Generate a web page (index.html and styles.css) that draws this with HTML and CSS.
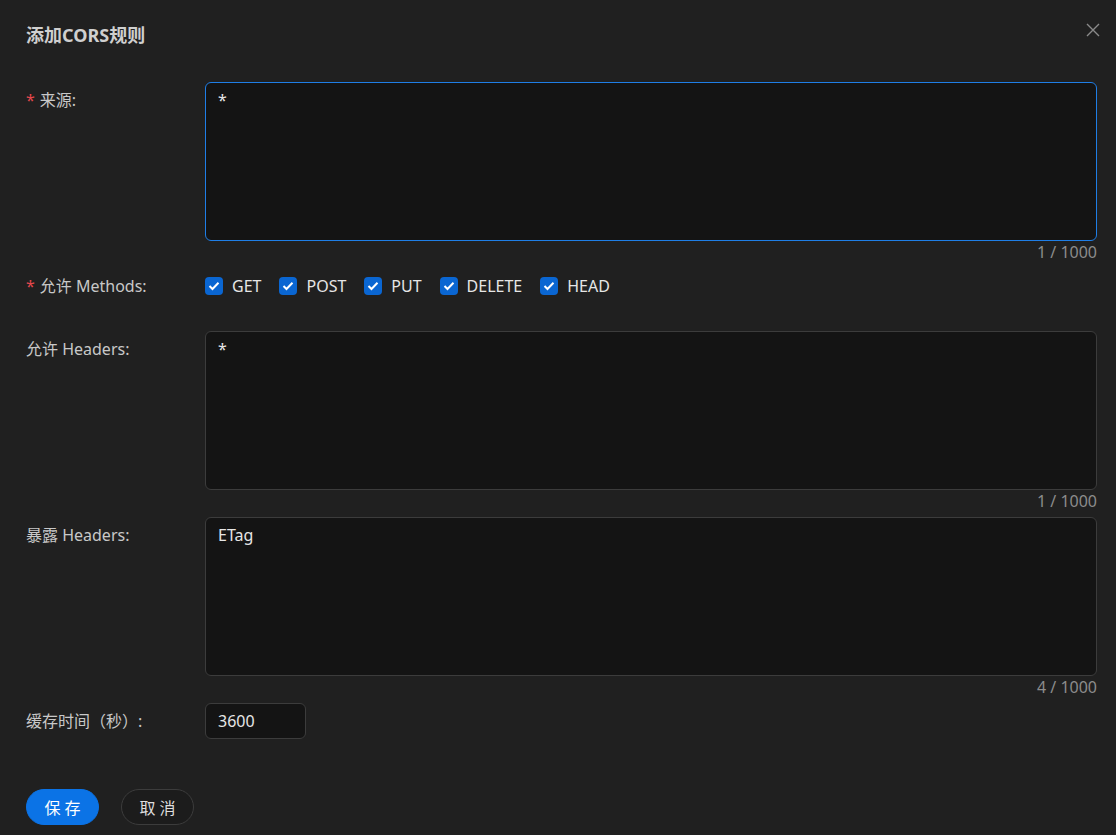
FILE: index.html
```html
<!DOCTYPE html>
<html lang="zh-CN">
<head>
    <meta charset="UTF-8">
    <title>添加CORS规则</title>
    <link rel="stylesheet" href="styles.css">
</head>
<body>
<div class="dialog">
    <div class="dialog-header">
        <h2 class="dialog-title">添加CORS规则</h2>
        <span class="dialog-close">
            <svg width="16" height="16" viewBox="0 0 16 16"><path d="M2 2 L14 14 M14 2 L2 14" stroke="#8a8a8a" stroke-width="1.4" fill="none"/></svg>
        </span>
    </div>

    <div class="form">
        <div class="form-item">
            <label class="form-label required">来源:</label>
            <div class="form-control">
                <textarea class="textarea focused">*</textarea>
                <div class="count">1 / 1000</div>
            </div>
        </div>

        <div class="form-item">
            <label class="form-label required">允许 Methods:</label>
            <div class="form-control">
                <div class="checks">
                    <span class="check"><i class="box"><svg width="12" height="10" viewBox="0 0 12 10"><path d="M1.5 5 L4.5 8 L10.5 1.8" stroke="#fff" stroke-width="2" fill="none"/></svg></i>GET</span>
                    <span class="check"><i class="box"><svg width="12" height="10" viewBox="0 0 12 10"><path d="M1.5 5 L4.5 8 L10.5 1.8" stroke="#fff" stroke-width="2" fill="none"/></svg></i>POST</span>
                    <span class="check"><i class="box"><svg width="12" height="10" viewBox="0 0 12 10"><path d="M1.5 5 L4.5 8 L10.5 1.8" stroke="#fff" stroke-width="2" fill="none"/></svg></i>PUT</span>
                    <span class="check"><i class="box"><svg width="12" height="10" viewBox="0 0 12 10"><path d="M1.5 5 L4.5 8 L10.5 1.8" stroke="#fff" stroke-width="2" fill="none"/></svg></i>DELETE</span>
                    <span class="check"><i class="box"><svg width="12" height="10" viewBox="0 0 12 10"><path d="M1.5 5 L4.5 8 L10.5 1.8" stroke="#fff" stroke-width="2" fill="none"/></svg></i>HEAD</span>
                </div>
                <div class="count"></div>
            </div>
        </div>

        <div class="form-item">
            <label class="form-label">允许 Headers:</label>
            <div class="form-control">
                <textarea class="textarea">*</textarea>
                <div class="count">1 / 1000</div>
            </div>
        </div>

        <div class="form-item">
            <label class="form-label">暴露 Headers:</label>
            <div class="form-control">
                <textarea class="textarea">ETag</textarea>
                <div class="count">4 / 1000</div>
            </div>
        </div>

        <div class="form-item">
            <label class="form-label">缓存时间（秒）:</label>
            <div class="form-control">
                <input class="input" type="text" value="3600">
            </div>
        </div>
    </div>

    <div class="dialog-footer">
        <button class="btn btn-primary">保 存</button>
        <button class="btn">取 消</button>
    </div>
</div>
</body>
</html>
```

FILE: styles.css
```css
html, body {
    margin: 0;
    padding: 0;
    background: #202020;
}
body {
    font-family: "Noto Sans", "Noto Sans CJK SC", sans-serif;
    font-size: 16px;
    color: #d4d4d4;
}

.dialog {
    width: 1116px;
    height: 835px;
    box-sizing: border-box;
    padding: 22px 15px 0 26px;
    background: #202020;
}

.dialog-header {
    display: flex;
    justify-content: space-between;
    align-items: flex-start;
    height: 60px;
}
.dialog-title {
    margin: 0;
    font-size: 18px;
    font-weight: bold;
    line-height: 26px;
    color: #cfcfcf;
}
.dialog-close {
    display: block;
    margin-top: -1px;
    cursor: pointer;
}

.form {
    padding-right: 4px;
}
.form-item {
    display: flex;
    margin-bottom: 5px;
}
.form-item:nth-child(4) {
    margin-top: 1px;
}
.form-label {
    width: 179px;
    flex: none;
    line-height: 36px;
    color: #c8c8c8;
}
.form-label.required::before {
    content: "*";
    color: #e5484d;
    margin-right: 5px;
}
.form-control {
    flex: 1;
    min-width: 0;
}

.textarea {
    display: block;
    width: 100%;
    height: 159px;
    box-sizing: border-box;
    padding: 5px 12px;
    margin: 0;
    background: #141414;
    border: 1px solid #3c3c3c;
    border-radius: 6px;
    color: #e6e6e6;
    font-family: inherit;
    font-size: 16px;
    line-height: 24px;
    resize: none;
    outline: none;
}
.textarea.focused {
    border-color: #1f7ee6;
}
.count {
    height: 22px;
    line-height: 22px;
    text-align: right;
    font-size: 16px;
    color: #8c8c8c;
}

.checks {
    display: flex;
    align-items: center;
    height: 36px;
}
.check {
    display: flex;
    align-items: center;
    margin-right: 18px;
    color: #e6e6e6;
}
.box {
    display: flex;
    align-items: center;
    justify-content: center;
    width: 18px;
    height: 18px;
    margin-right: 9px;
    border-radius: 4px;
    background: #0a66d2;
}

.input {
    display: block;
    width: 101px;
    height: 36px;
    box-sizing: border-box;
    padding: 0 12px;
    margin: 0;
    background: #141414;
    border: 1px solid #3c3c3c;
    border-radius: 6px;
    color: #e6e6e6;
    font-family: inherit;
    font-size: 16px;
    outline: none;
}

.dialog-footer {
    display: flex;
    gap: 22px;
    margin-top: 50px;
}
.btn {
    width: 73px;
    height: 36px;
    border-radius: 18px;
    border: 1px solid #3c3c3c;
    background: #1c1c1c;
    color: #dedede;
    font-family: inherit;
    font-size: 16px;
    cursor: pointer;
}
.btn-primary {
    border-color: #0b73e6;
    background: #0b73e6;
    color: #fff;
}
```
